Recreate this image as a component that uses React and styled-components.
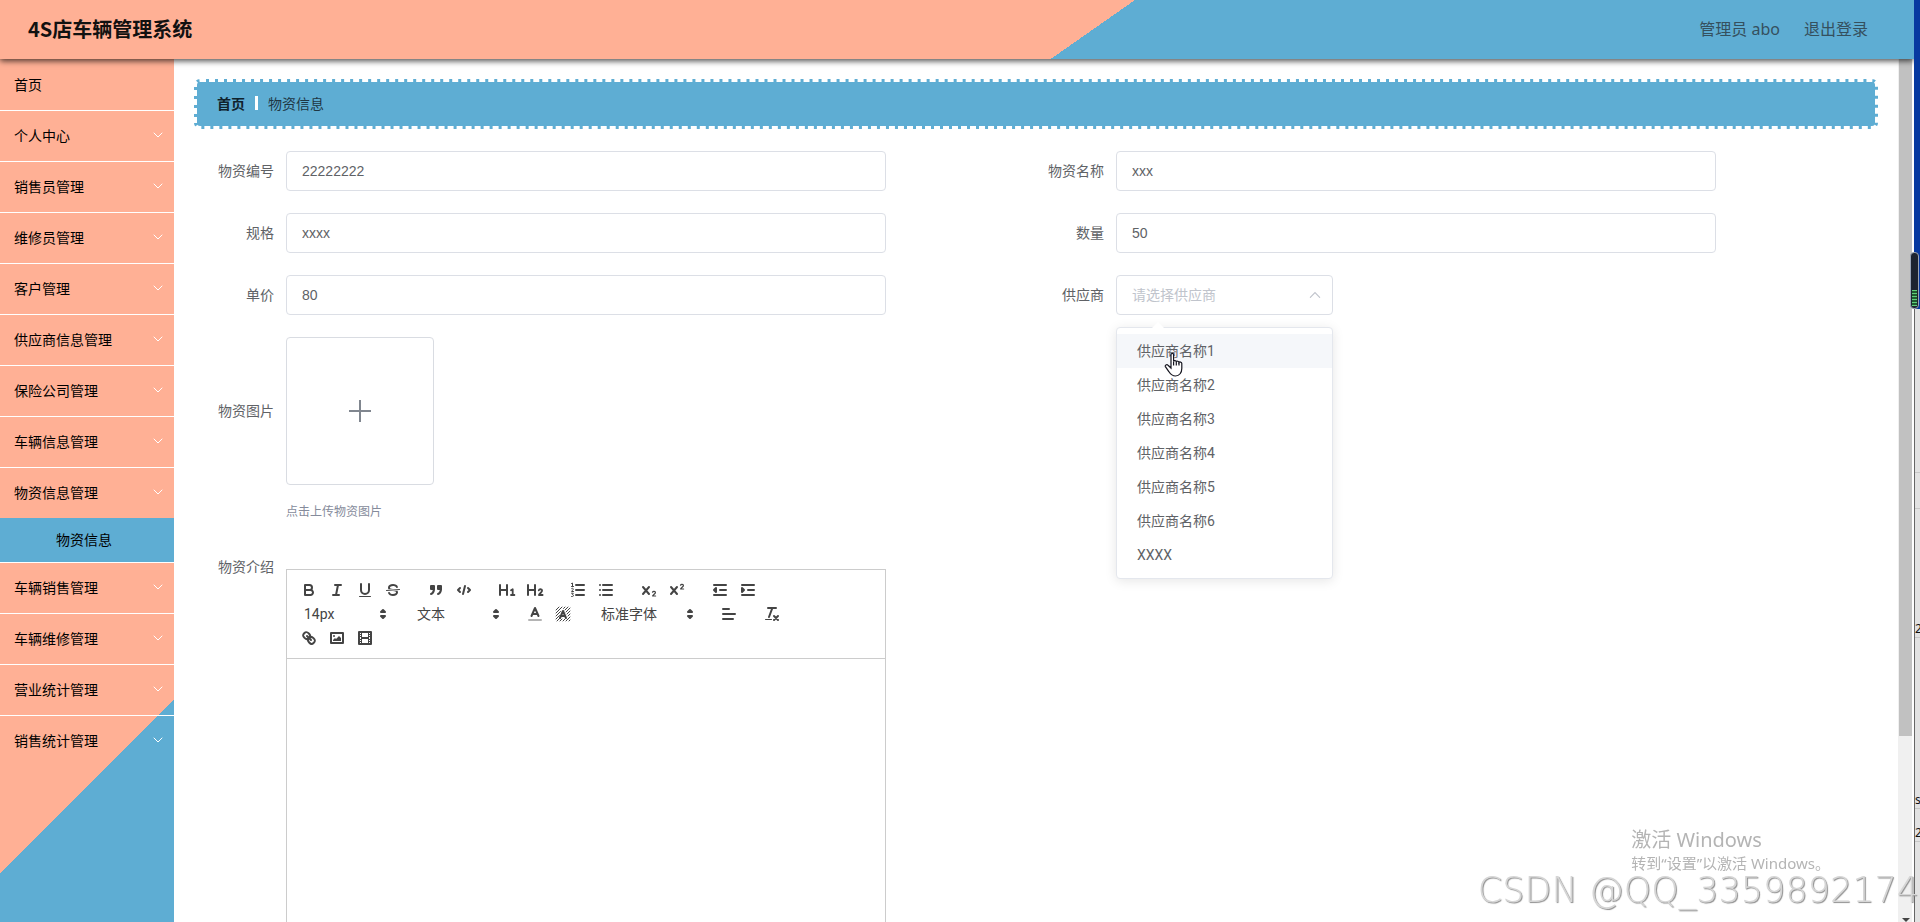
import React, { useState } from "react";
import styled, { createGlobalStyle, css } from "styled-components";

const SALMON = "#ffb095";
const BLUE = "#5eadd3";

const GlobalStyle = createGlobalStyle`
  *, *::before, *::after { box-sizing: border-box; }
  body {
    margin: 0;
    overflow: hidden;
    background: #fff;
    color: #606266;
    font-family: "Noto Sans", "Noto Sans CJK SC", sans-serif;
    font-size: 14px;
  }
  button, input, select { font: inherit; color: inherit; }
`;

/* ---------- shell ---------- */

const Desktop = styled.div`
  display: flex;
  height: 100vh;
  overflow: hidden;
`;

const BrowserWindow = styled.div`
  flex: 1;
  min-width: 0;
  display: flex;
  flex-direction: column;
`;

const Header = styled.header`
  position: relative;
  z-index: 2;
  flex: none;
  height: 59px;
  padding: 0 46px 2px 28px;
  display: flex;
  align-items: center;
  justify-content: space-between;
  background: linear-gradient(145deg, ${SALMON} 56.8%, ${BLUE} 56.8%);
  box-shadow: 0 2px 6px rgba(0, 0, 0, 0.7);
`;

const Brand = styled.h1`
  margin: 0;
  font-family: "Noto Sans CJK SC", sans-serif;
  font-size: 20px;
  line-height: 28px;
  font-weight: 700;
  color: #111;
`;

const Account = styled.div`
  display: flex;
  gap: 24px;
  font-size: 16px;
  line-height: 24px;
  color: #35505e;
`;

const Logout = styled.button`
  border: 0;
  padding: 0;
  background: none;
  cursor: pointer;
`;

const Body = styled.div`
  flex: 1;
  min-height: 0;
  display: flex;
  padding-right: 2px;
`;

const Sidebar = styled.nav`
  flex: none;
  width: 174px;
  padding-top: 1px;
  overflow: hidden;
  background: linear-gradient(135deg, ${SALMON} calc(100% - 157px), ${BLUE} calc(100% - 157px));
`;

const Menu = styled.ul`
  margin: 0;
  padding: 0;
  list-style: none;
`;

const MenuItem = styled.li`
  border-bottom: 1px solid #fff;
  &:last-child { border-bottom: 0; }
`;

const MenuTitle = styled.a`
  display: flex;
  align-items: center;
  justify-content: space-between;
  height: 50px;
  padding: 0 10px 2px 14px;
  color: #000;
  text-decoration: none;
`;

const SubLink = styled.a`
  display: flex;
  align-items: center;
  height: 44px;
  padding: 0 0 2px 56px;
  background: ${BLUE};
  color: #000;
  text-decoration: none;
`;

const Main = styled.main`
  flex: 1;
  min-width: 0;
  overflow: hidden;
  padding: 20px;
`;

const ScrollTrack = styled.div`
  flex: none;
  width: 14px;
  padding-left: 1px;
  display: flex;
  flex-direction: column;
  justify-content: space-between;
  align-items: center;
  overflow: hidden;
  background: #f0f0f0;
`;

const ScrollThumb = styled.div`
  width: 100%;
  height: 78.5%;
  background: #c1c1c1;
`;

const ScrollArrow = styled.div`
  border: 4px solid transparent;
  border-top-color: #444;
  border-bottom: 0;
`;

/* ---------- content ---------- */

const Breadcrumb = styled.nav`
  display: flex;
  align-items: center;
  gap: 10px;
  height: 50px;
  margin-bottom: 22px;
  padding: 0 20px 2px;
  border: 3px dashed #fff;
  border-radius: 6px;
  background: ${BLUE};
  color: #1e3644;
`;

const CrumbHome = styled.a`
  color: #10222c;
  font-weight: 700;
  text-decoration: none;
`;

const CrumbDivider = styled.span`
  width: 3px;
  height: 14px;
  background: #fff;
`;

const Form = styled.form`
  display: grid;
  grid-template-columns: 1fr 1fr;
  row-gap: 22px;
  padding: 0 12px;
`;

const FormItem = styled.div`
  display: flex;
  grid-column: ${(p) => (p.$wide ? "1 / -1" : "auto")};
`;

const Label = styled.label`
  flex: none;
  width: 80px;
  padding-right: 12px;
  text-align: right;
  line-height: ${(p) => (p.$tall ? "148px" : "40px")};
`;

const fieldBox = css`
  height: 40px;
  border: 1px solid #dcdfe6;
  border-radius: 4px;
  background: #fff;
  padding: 0 15px;
  outline: none;
  font-family: "Liberation Sans", "Noto Sans CJK SC", sans-serif;
`;

const TextInput = styled.input`
  ${fieldBox}
  width: 100%;
  max-width: 600px;
`;

const SelectWrap = styled.div`
  position: relative;
  width: 217px;
  height: 40px;
`;

const SupplierSelect = styled.select`
  ${fieldBox}
  width: 100%;
  appearance: none;
  color: ${(p) => (p.$empty ? "#c0c4cc" : "#606266")};
`;

const SelectChevron = styled.span`
  position: absolute;
  top: 0;
  right: 11px;
  height: 100%;
  display: flex;
  align-items: center;
  color: #c0c4cc;
  pointer-events: none;
`;

const Options = styled.ul`
  position: absolute;
  z-index: 3;
  top: 100%;
  left: 0;
  width: 100%;
  margin: 12px 0 0;
  padding: 6px 0;
  list-style: none;
  font-family: Roboto, "Noto Sans CJK SC", sans-serif;
  background: #fff;
  border: 1px solid #e4e7ed;
  border-radius: 4px;
  box-shadow: 0 2px 12px rgba(0, 0, 0, 0.1);

  &::before {
    content: "";
    position: absolute;
    top: -6px;
    left: 35px;
    border: 6px solid transparent;
    border-top: 0;
    border-bottom-color: #fff;
  }
`;

const Option = styled.li`
  height: 34px;
  line-height: 34px;
  padding: 0 20px;
  cursor: pointer;
  background: ${(p) => (p.$hover ? "#f5f7fa" : "transparent")};
`;

const Pointer = styled.svg`
  position: absolute;
  z-index: 4;
  top: 77px;
  left: 48px;
  pointer-events: none;
`;

const UploadField = styled.div`
  display: flex;
  flex-direction: column;
`;

const UploadBox = styled.label`
  position: relative;
  display: flex;
  align-items: center;
  justify-content: center;
  width: 148px;
  height: 148px;
  border: 1px solid #d9dce2;
  border-radius: 4px;
  color: #80868f;
  cursor: pointer;
`;

const FileInput = styled.input`
  position: absolute;
  width: 1px;
  height: 1px;
  opacity: 0;
`;

const UploadTip = styled.p`
  margin: 14px 0 0;
  font-size: 12px;
  line-height: 26px;
  color: #858b9b;
`;

/* ---------- rich text editor ---------- */

const Editor = styled.div`
  width: 100%;
  max-width: 600px;
  margin-top: 22px;
  border: 1px solid #ccc;
`;

const Toolbar = styled.div`
  display: flex;
  flex-wrap: wrap;
  padding: 8px 0 8px 8px;
  border-bottom: 1px solid #ccc;
  color: #444;
`;

const ToolGroup = styled.div`
  display: flex;
  margin-right: 15px;
`;

const ToolButton = styled.button`
  display: flex;
  width: 28px;
  height: 24px;
  padding: 3px 5px;
  border: 0;
  background: none;
  cursor: pointer;
`;

const Picker = styled.div`
  position: relative;
  display: flex;
  width: ${(p) => p.$width}px;
  height: 24px;
`;

const PickerSelect = styled.select`
  width: 100%;
  padding: 0 18px 0 9px;
  border: 0;
  background: none;
  appearance: none;
  outline: none;
  font-family: Roboto, "Noto Sans CJK SC", sans-serif;
`;

const PickerCaret = styled.span`
  position: absolute;
  top: 3px;
  right: 1px;
  display: flex;
  pointer-events: none;
`;

const EditArea = styled.div`
  min-height: 400px;
  padding: 12px 15px;
  outline: none;
`;

/* ---------- overlays and desktop edge ---------- */

const ActivateNotice = styled.div`
  position: fixed;
  z-index: 5;
  right: 90px;
  bottom: 49px;
  color: #b4b4b4;
  pointer-events: none;
`;

const NoticeTitle = styled.div`
  font-size: 20px;
  line-height: 26px;
`;

const NoticeText = styled.div`
  font-size: 15px;
  line-height: 20px;
`;

const Watermark = styled.div`
  position: fixed;
  z-index: 6;
  right: 1px;
  bottom: 12px;
  font-family: "DejaVu Sans", sans-serif;
  font-weight: 200;
  font-size: 35px;
  line-height: 40px;
  white-space: nowrap;
  color: #d6d6d6;
  text-shadow: 1px 1px 1px #8c8c8c;
  pointer-events: none;
`;

const DesktopEdge = styled.aside`
  position: relative;
  z-index: 3;
  flex: none;
  width: 6px;
  display: flex;
  flex-direction: column;
`;

const Wallpaper = styled.div`
  height: 309px;
  background: #0739a0;
`;

const BackWindow = styled.div`
  flex: 1;
  overflow: hidden;
  border-left: 1px solid #666;
  background: #e2e2e2;
  color: #111;
  font-size: 12px;
  line-height: 16px;
`;

const BackLine = styled.div`
  height: ${(p) => p.$height}px;
  display: flex;
  align-items: flex-end;
  border-bottom: 1px solid #c8c8c8;
  white-space: nowrap;
`;

const Meter = styled.div`
  position: absolute;
  top: 252px;
  right: 1px;
  width: 9px;
  height: 57px;
  padding: 37px 1px 2px;
  border: 1px solid #9aa4b4;
  border-radius: 4px;
  background: #1d2430;
`;

const MeterBars = styled.div`
  height: 100%;
  background: repeating-linear-gradient(#5fd07c 0 1px, #1f5a30 1px 3px);
`;

/* ---------- icons ---------- */

const Chevron = ({ up, size = 12 }) => (
  <svg width={size} height={size} viewBox="0 0 12 12" fill="none" stroke="currentColor" strokeLinecap="round" aria-hidden="true">
    <path d={up ? "M2 8L6 4L10 8" : "M2 4L6 8L10 4"} />
  </svg>
);

const MenuArrow = styled.span`
  display: flex;
  width: 12px;
  color: #fff;
`;

const Glyph = ({ children }) => (
  <svg width="18" height="18" viewBox="0 0 18 18" fill="none" stroke="currentColor" strokeWidth="2" strokeLinecap="round" strokeLinejoin="round" aria-hidden="true">
    {children}
  </svg>
);

const solid = { fill: "currentColor", stroke: "none" };
const CROSS = "M3 6L9 13M9 6L3 13";

const ICONS = {
  bold: (
    <>
      <path d="M5,4H9.5A2.5,2.5,0,0,1,12,6.5v0A2.5,2.5,0,0,1,9.5,9H5V4Z" />
      <path d="M5,9h5.5A2.5,2.5,0,0,1,13,11.5v0A2.5,2.5,0,0,1,10.5,14H5V9Z" />
    </>
  ),
  italic: <path d="M7 4H13M5 14H11M8 14L10 4" />,
  underline: (
    <>
      <path d="M5,3V9a4,4,0,0,0,4,4H9a4,4,0,0,0,4-4V3" />
      <rect {...solid} x="3" y="15" width="12" height="1" rx=".5" />
    </>
  ),
  strike: (
    <>
      <path strokeWidth="1" d="M15.5 8.5L2.5 9.5" />
      <path {...solid} d="M9.007,8C6.542,7.791,6,7.519,6,6.5,6,5.792,7.283,5,9,5c1.571,0,2.765.679,2.969,1.309a1,1,0,0,0,1.9-.617C13.356,4.106,11.354,3,9,3,6.2,3,4,4.538,4,6.5a3.2,3.2,0,0,0,.5,1.843Z" />
      <path {...solid} d="M8.984,10C11.457,10.208,12,10.479,12,11.5c0,0.708-1.283,1.5-3,1.5-1.571,0-2.765-.679-2.969-1.309a1,1,0,1,0-1.9.617C4.644,13.894,6.646,15,9,15c2.8,0,5-1.538,5-3.5a3.2,3.2,0,0,0-.5-1.843Z" />
    </>
  ),
  quote: (
    <>
      <rect fill="currentColor" x="4" y="5" width="3" height="3" />
      <rect fill="currentColor" x="11" y="5" width="3" height="3" />
      <path fill="currentColor" d="M7,8c0,4.031-3,5-3,5" />
      <path fill="currentColor" d="M14,8c0,4.031-3,5-3,5" />
    </>
  ),
  code: <path d="M5 7L3 9L5 11M13 7L15 9L13 11M10 5L8 13" />,
  h1: (
    <>
      <path d="M2 4V14M9 4V14M2 9H9" />
      <path strokeWidth="1.8" d="M13 9.2L14.7 8.2V14M13 14H16.4" />
    </>
  ),
  h2: (
    <>
      <path d="M2 4V14M9 4V14M2 9H9" />
      <path strokeWidth="1.8" d="M12.8 9.4C13.2 7.8 16.2 7.8 16.1 9.8C16 11.2 13.6 12.4 12.9 14H16.6" />
    </>
  ),
  ordered: (
    <>
      <path d="M7 4H15M7 9H15M7 14H15" />
      <path strokeWidth="1" d="M2.5 2.5L3.5 2V5.5M2.5 5.5H4.5M2.5 7.6C3 7 4.5 7.2 4.3 8.2C4.1 9 3 9.4 2.6 10.5H4.5M2.5 12.2H4.3L3.4 13.5C4.8 13.6 4.8 15.5 3.4 15.5H2.6" />
    </>
  ),
  bullet: <path d="M6 4H15M6 9H15M6 14H15M3 4H3M3 9H3M3 14H3" />,
  sub: (
    <>
      <path d={CROSS} />
      <path strokeWidth="1.2" d="M12.5 11.2C13 9.9 15.6 10.1 15.4 11.6C15.3 12.7 13 13.6 12.6 15H15.6" />
    </>
  ),
  sup: (
    <>
      <path d={CROSS} />
      <path strokeWidth="1.2" d="M12.5 4.2C13 2.9 15.6 3.1 15.4 4.6C15.3 5.7 13 6.6 12.6 8H15.6" />
    </>
  ),
  outdent: <path fill="currentColor" d="M3 14H15M3 4H15M9 9H15M5 7V11L3 9L5 7" />,
  indent: <path fill="currentColor" d="M3 14H15M3 4H15M9 9H15M3 7V11L5 9L3 7" />,
  color: (
    <>
      <path opacity=".4" d="M3 15H15" />
      <path d="M5.5 11L9 3L12.5 11M11.6 9H6.4" />
    </>
  ),
  background: (
    <>
      <path strokeWidth="1" d="M2 5L5 2M2 8L8 2M2 11L6.5 6.5M2 14L5.5 10.5M3 16L6 13M6 16L8 14M9 16L11 14M12 16L16 12M15 16L16 15M9.5 3.5L11 2M11 5L14 2M12 7L16 3M13 9L16 6M14 11L16 9" />
      <path d="M6 13L9 6L12 13M11 11H7" />
    </>
  ),
  align: <path d="M3 9H15M3 14H13M3 4H9" />,
  clean: (
    <>
      <path d="M5 3H13M6 12L9.35 3M11 11L15 15M15 11L11 15" />
      <rect {...solid} x="2" y="14" width="7" height="1" rx=".5" />
    </>
  ),
  link: (
    <>
      <path d="M7 7L11 11" />
      <path d="M8.9,4.577a3.476,3.476,0,0,1,.36,4.679A3.476,3.476,0,0,1,4.577,8.9C3.185,7.5,2.035,6.4,4.217,4.217S7.5,3.185,8.9,4.577Z" />
      <path d="M13.423,9.1a3.476,3.476,0,0,0-4.679-.36,3.476,3.476,0,0,0,.36,4.679c1.392,1.392,2.5,2.542,4.679.36S14.815,10.5,13.423,9.1Z" />
    </>
  ),
  image: (
    <>
      <rect x="3" y="4" width="12" height="10" />
      <circle {...solid} cx="6" cy="7" r="1" />
      <path {...solid} d="M5 12V11L7 9L8 10L11 7L13 9V12Z" />
    </>
  ),
  video: (
    <>
      <rect x="3" y="3" width="12" height="12" />
      <path {...solid} d="M5 3h1v12h-1zM12 3h1v12h-1zM5 8h8v2h-8zM3 5h3v1h-3zM3 7h3v1h-3zM3 10h3v1h-3zM3 12h3v1h-3zM12 5h3v1h-3zM12 7h3v1h-3zM12 10h3v1h-3zM12 12h3v1h-3z" />
    </>
  ),
  caret: <path fill="currentColor" d="M7 11L9 13L11 11ZM7 7L9 5L11 7Z" />,
};

const TOOLBAR = [
  [["bold", "加粗"], ["italic", "斜体"], ["underline", "下划线"], ["strike", "删除线"]],
  [["quote", "引用"], ["code", "代码块"]],
  [["h1", "一级标题"], ["h2", "二级标题"]],
  [["ordered", "有序列表"], ["bullet", "无序列表"]],
  [["sub", "下标"], ["sup", "上标"]],
  [["outdent", "减少缩进"], ["indent", "增加缩进"]],
  { text: "14px", label: "字号", width: 98 },
  { text: "文本", label: "段落格式", width: 98 },
  [["color", "字体颜色"], ["background", "背景颜色"]],
  { text: "标准字体", label: "字体", width: 108 },
  [["align", "对齐"]],
  [["clean", "清除格式"]],
  [["link", "链接"], ["image", "图片"], ["video", "视频"]],
];

const MENU = [
  { title: "首页", leaf: true },
  { title: "个人中心" },
  { title: "销售员管理" },
  { title: "维修员管理" },
  { title: "客户管理" },
  { title: "供应商信息管理" },
  { title: "保险公司管理" },
  { title: "车辆信息管理" },
  { title: "物资信息管理", child: "物资信息" },
  { title: "车辆销售管理" },
  { title: "车辆维修管理" },
  { title: "营业统计管理" },
  { title: "销售统计管理" },
];

const FIELDS = [
  { id: "code", label: "物资编号", value: "22222222" },
  { id: "name", label: "物资名称", value: "xxx" },
  { id: "spec", label: "规格", value: "xxxx" },
  { id: "count", label: "数量", value: "50" },
  { id: "price", label: "单价", value: "80" },
];

const SUPPLIERS = ["供应商名称1", "供应商名称2", "供应商名称3", "供应商名称4", "供应商名称5", "供应商名称6", "XXXX"];

function SupplierPicker() {
  const [value, setValue] = useState("");
  const [hovered, setHovered] = useState(0);
  return (
    <SelectWrap>
      <SupplierSelect id="supplier" $empty={!value} value={value} onChange={(e) => setValue(e.target.value)}>
        <option value="">请选择供应商</option>
        {value && <option value={value}>{value}</option>}
      </SupplierSelect>
      <SelectChevron><Chevron up size={14} /></SelectChevron>
      <Options role="listbox" aria-label="供应商">
        {SUPPLIERS.map((name, i) => (
          <Option
            key={name}
            role="option"
            aria-selected={name === value}
            $hover={i === hovered}
            onMouseEnter={() => setHovered(i)}
            onClick={() => setValue(name)}
          >
            {name}
          </Option>
        ))}
      </Options>
      <Pointer width="20" height="26" viewBox="0 0 20 26" aria-hidden="true">
        <path
          d="M7 2.5C7 1 9.6 1 9.6 2.5V9.5C9.8 8.4 12.2 8.4 12.3 9.8C12.7 8.9 14.9 9 15 10.4C15.4 9.7 17.8 9.8 17.8 11.5V16.5C17.8 20.5 15.5 24 11.5 24C8 24 6.6 22.4 5 19.8L1.4 14.6C.6 13.2 2.8 12 4 13.2L7 16Z"
          fill="#fff"
          stroke="#15151f"
          strokeWidth="1.2"
        />
        <path d="M9.6 9.5V13.5M12.3 9.8V13.5M15 10.4V13.5" stroke="#15151f" strokeWidth="1.2" />
      </Pointer>
    </SelectWrap>
  );
}

function EditorToolbar() {
  return (
    <Toolbar>
      {TOOLBAR.map((group) =>
        Array.isArray(group) ? (
          <ToolGroup key={group[0][0]}>
            {group.map(([icon, label]) => (
              <ToolButton key={icon} type="button" aria-label={label}>
                <Glyph>{ICONS[icon]}</Glyph>
              </ToolButton>
            ))}
          </ToolGroup>
        ) : (
          <ToolGroup key={group.text}>
            <Picker $width={group.width}>
              <PickerSelect aria-label={group.label} defaultValue={group.text}>
                <option>{group.text}</option>
              </PickerSelect>
              <PickerCaret><Glyph>{ICONS.caret}</Glyph></PickerCaret>
            </Picker>
          </ToolGroup>
        )
      )}
    </Toolbar>
  );
}

export default function App() {
  return (
    <>
      <GlobalStyle />
      <Desktop>
        <BrowserWindow>
          <Header>
            <Brand>4S店车辆管理系统</Brand>
            <Account>
              <span>管理员 abo</span>
              <Logout type="button">退出登录</Logout>
            </Account>
          </Header>
          <Body>
            <Sidebar>
              <Menu>
                {MENU.map((item) => (
                  <MenuItem key={item.title}>
                    <MenuTitle href="#">
                      {item.title}
                      {!item.leaf && <MenuArrow><Chevron /></MenuArrow>}
                    </MenuTitle>
                    {item.child && <SubLink href="#">{item.child}</SubLink>}
                  </MenuItem>
                ))}
              </Menu>
            </Sidebar>
            <Main>
              <Breadcrumb>
                <CrumbHome href="#">首页</CrumbHome>
                <CrumbDivider />
                <span>物资信息</span>
              </Breadcrumb>
              <Form onSubmit={(e) => e.preventDefault()}>
                {FIELDS.map((f) => (
                  <FormItem key={f.id}>
                    <Label htmlFor={f.id}>{f.label}</Label>
                    <TextInput id={f.id} type="text" defaultValue={f.value} />
                  </FormItem>
                ))}
                <FormItem>
                  <Label htmlFor="supplier">供应商</Label>
                  <SupplierPicker />
                </FormItem>
                <FormItem $wide>
                  <Label htmlFor="photo" $tall>物资图片</Label>
                  <UploadField>
                    <UploadBox>
                      <FileInput id="photo" type="file" accept="image/*" />
                      <svg width="24" height="24" viewBox="0 0 24 24" stroke="currentColor" strokeWidth="2" aria-hidden="true">
                        <path d="M12 1V23M1 12H23" />
                      </svg>
                    </UploadBox>
                    <UploadTip>点击上传物资图片</UploadTip>
                  </UploadField>
                </FormItem>
                <FormItem $wide>
                  <Label as="span" id="intro-label">物资介绍</Label>
                  <Editor>
                    <EditorToolbar />
                    <EditArea contentEditable suppressContentEditableWarning role="textbox" aria-labelledby="intro-label" />
                  </Editor>
                </FormItem>
              </Form>
            </Main>
            <ScrollTrack>
              <ScrollThumb />
              <ScrollArrow />
            </ScrollTrack>
          </Body>
        </BrowserWindow>
        <DesktopEdge>
          <Wallpaper />
          <BackWindow>
            <BackLine $height={164} />
            <BackLine $height={36} />
            <BackLine $height={129}>2</BackLine>
            <BackLine $height={171}>sr</BackLine>
            <BackLine $height={33}>2</BackLine>
          </BackWindow>
          <Meter><MeterBars /></Meter>
        </DesktopEdge>
      </Desktop>
      <ActivateNotice>
        <NoticeTitle>激活 Windows</NoticeTitle>
        <NoticeText>转到“设置”以激活 Windows。</NoticeText>
      </ActivateNotice>
      <Watermark>CSDN @QQ_3359892174</Watermark>
    </>
  );
}
